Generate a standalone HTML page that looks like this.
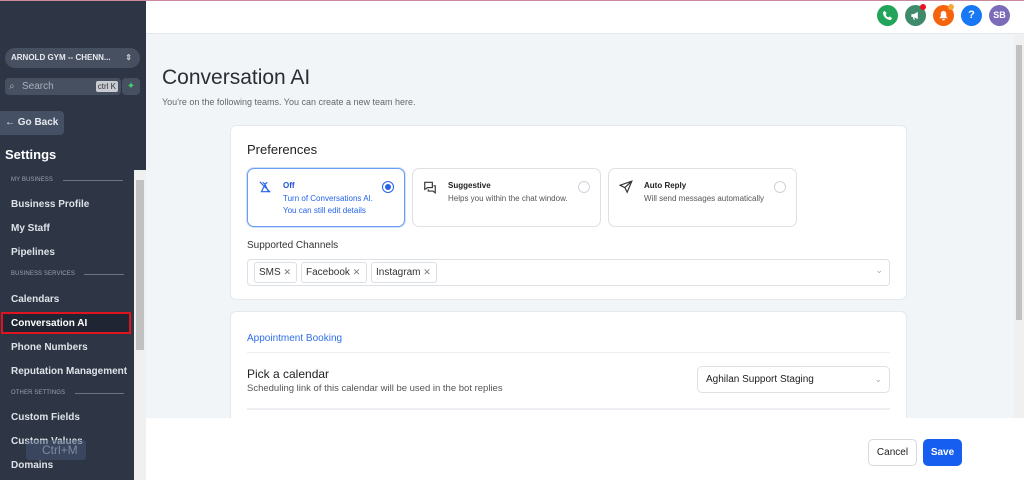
<!DOCTYPE html>
<html><head><meta charset="utf-8"><style>
*{box-sizing:border-box;margin:0;padding:0}
body{width:1024px;height:480px;overflow:hidden;font-family:"Liberation Sans",sans-serif;background:#f2f5f8;position:relative}
.sb{position:absolute;left:0;top:0;width:146px;height:480px;background:#2e3646;color:#e6e9ee}
.topline{position:absolute;left:0;top:0;width:1024px;height:1px;background:#c9889c;z-index:5}
.hdr{position:absolute;left:146px;top:0;width:878px;height:34px;background:#fff;border-bottom:1px solid #e3e6ea}
.ic{position:absolute;top:5px;width:21px;height:21px;border-radius:50%;color:#fff;font-size:11px;font-weight:bold;text-align:center;line-height:21px}
.ic svg{position:absolute;left:5px;top:5px}
.acct{position:absolute;left:5px;top:48px;width:135px;height:20px;border-radius:10px;background:#475061;font-size:8px;font-weight:bold;padding-left:6px;line-height:20px}
.srch{position:absolute;left:5px;top:78px;width:116px;height:17px;border-radius:4px;background:#475061;font-size:10px;color:#a8afba;line-height:17px;padding-left:17px}
.kbd{position:absolute;right:3px;top:3px;background:#c8ccd2;color:#333;font-size:8px;line-height:11px;padding:0 2px;border-radius:2px}
.bolt{position:absolute;left:122px;top:78px;width:18px;height:17px;border-radius:4px;background:#475061;color:#3ecf6a;font-size:10px;text-align:center;line-height:17px}
.back{position:absolute;left:0;top:111px;width:64px;height:24px;border-radius:0 4px 4px 0;background:#465064;font-size:10px;font-weight:bold;line-height:24px;padding-left:5px}
.set{position:absolute;left:5px;top:147px;font-size:13px;font-weight:bold;color:#fff}
.sec{position:absolute;left:11px;font-size:6px;color:#9aa2ae;letter-spacing:.1px}
.sec i{position:absolute;top:3px;height:1px;background:#6c7482}
.it{position:absolute;left:11px;font-size:10px;font-weight:bold;color:#dfe3e8}
.sel{position:absolute;left:1px;top:312px;width:130px;height:22px;border:2px solid #e0141e;background:#1f2533}
.sbar{position:absolute;left:134px;top:170px;width:12px;height:310px;background:#f0f0f0}
.card{position:absolute;background:#fff;border:1px solid #e5e8ec;border-radius:6px}
.opt{position:absolute;top:168px;width:158px;height:59px;border:1px solid #dde1e6;border-radius:7px;background:#fff}
.opt b{position:absolute;left:35px;top:12px;font-size:8px;color:#222}
.opt span{position:absolute;left:35px;top:24px;font-size:8px;line-height:12px;color:#555}
.opt svg{position:absolute;left:10px;top:11px}
.rad{position:absolute;right:10px;top:12px;width:12px;height:12px;border-radius:50%;border:1px solid #cfd4da}
.tag{position:absolute;top:262px;height:21px;border:1px solid #dcdfe4;border-radius:3px;font-size:10px;color:#333;line-height:19px;padding-left:4px}
.tag i{font-style:normal;color:#777;font-size:9px}
.foot{position:absolute;left:146px;top:418px;width:878px;height:62px;background:#fff}
</style></head><body>
<div class="topline"></div>
<div class="sb">
 <div class="acct">ARNOLD GYM -- CHENN...<span style="position:absolute;right:8px;top:0;font-size:8px;color:#ccc">⇕</span></div>
 <div class="srch"><span style="position:absolute;left:4px;top:0;font-size:10px">⌕</span>Search<span class="kbd">ctrl K</span></div>
 <div class="bolt">✦</div>
 <div class="back">← Go Back</div>
 <div class="set">Settings</div>
 <div class="sec" style="top:177px">MY BUSINESS<i style="left:52px;width:60px"></i></div>
 <div class="it" style="top:199px">Business Profile</div>
 <div class="it" style="top:223px">My Staff</div>
 <div class="it" style="top:247px">Pipelines</div>
 <div class="sec" style="top:271px">BUSINESS SERVICES<i style="left:73px;width:40px"></i></div>
 <div class="sel"></div>
 <div class="it" style="top:294px">Calendars</div>
 <div class="it" style="top:318px;color:#fff">Conversation AI</div>
 <div class="it" style="top:342px">Phone Numbers</div>
 <div class="it" style="top:366px">Reputation Management</div>
 <div class="sec" style="top:390px">OTHER SETTINGS<i style="left:64px;width:49px"></i></div>
 <div class="it" style="top:412px">Custom Fields</div>
 <div class="it" style="top:436px">Custom Values</div>
 <div style="position:absolute;left:26px;top:440px;width:60px;height:20px;background:rgba(70,85,115,.5);border-radius:3px;color:rgba(140,155,185,.8);font-size:12px;line-height:20px;padding-left:16px">Ctrl+M</div>
 <div class="it" style="top:460px">Domains</div>
 <div class="sbar"><div style="position:absolute;left:2px;top:10px;width:8px;height:170px;background:#c1c1c1"></div></div>
</div>
<div class="hdr">
 <div class="ic" style="left:731px;background:#22a55a"><svg width="11" height="11" viewBox="0 0 24 24"><path d="M6 2l4 5-2 3c1 3 3 5 6 6l3-2 5 4-3 4C10 22 2 14 2 5z" fill="#fff"/></svg></div>
 <div class="ic" style="left:759px;background:#3e8a6a"><svg width="11" height="11" viewBox="0 0 24 24"><path d="M3 9h5l9-5v16l-9-5H3zM6 15l2 6h3l-2-6" fill="#fff"/></svg></div>
 <div style="position:absolute;left:774px;top:4px;width:6px;height:6px;border-radius:50%;background:#e8141e"></div>
 <div class="ic" style="left:787px;background:#f5630c"><svg width="11" height="11" viewBox="0 0 24 24"><path d="M12 2a6 6 0 0 0-6 6v6l-3 4h18l-3-4V8a6 6 0 0 0-6-6zM9 20a3 3 0 0 0 6 0z" fill="#fff"/></svg></div>
 <div style="position:absolute;left:802px;top:4px;width:6px;height:6px;border-radius:50%;background:#f6a93b"></div>
 <div class="ic" style="left:815px;background:#1877f2">?</div>
 <div class="ic" style="left:843px;background:#7b6bb8;font-size:9px">SB</div>
</div>
<div style="position:absolute;left:1014px;top:35px;width:10px;height:383px;background:#f0f0f0"><div style="position:absolute;left:2px;top:10px;width:6px;height:275px;background:#c1c1c1"></div></div>
<div style="position:absolute;left:162px;top:66px;font-size:21px;color:#2a2f36">Conversation AI</div>
<div style="position:absolute;left:162px;top:97px;font-size:9px;color:#666">You're on the following teams. You can create a new team here.</div>
<div class="card" style="left:230px;top:125px;width:677px;height:175px"></div>
<div style="position:absolute;left:247px;top:142px;font-size:13px;color:#222">Preferences</div>
<div class="opt" style="left:247px;border-color:#6b9df0;box-shadow:0 0 0 1px #cfe0fb"><svg width="14" height="14" viewBox="0 0 24 24" fill="none" stroke="#2563eb" stroke-width="2"><path d="M3 3l18 18M8 4l4 3 4-3M6 20L12 8l6 12z"/></svg><b style="color:#1d4ed8">Off</b><span style="color:#2563eb">Turn of Conversations AI.<br>You can still edit details</span><div class="rad" style="border-color:#2563eb"><div style="margin:2px;width:6px;height:6px;border-radius:50%;background:#2563eb"></div></div></div>
<div class="opt" style="left:412px;width:189px"><svg width="14" height="14" viewBox="0 0 24 24" fill="none" stroke="#333" stroke-width="2"><path d="M3 4h13v9H8l-5 3zM9 16v3h8l4 3V10h-3"/></svg><b>Suggestive</b><span>Helps you within the chat window.</span><div class="rad"></div></div>
<div class="opt" style="left:608px;width:189px"><svg width="14" height="14" viewBox="0 0 24 24" fill="none" stroke="#333" stroke-width="2"><path d="M22 2L2 9l8 4 4 8zM10 13l12-11"/></svg><b>Auto Reply</b><span>Will send messages automatically</span><div class="rad"></div></div>
<div style="position:absolute;left:247px;top:240px;font-size:10px;color:#333">Supported Channels</div>
<div style="position:absolute;left:247px;top:259px;width:643px;height:27px;border:1px solid #dde1e6;border-radius:4px"><span style="position:absolute;right:6px;top:5px;font-size:9px;color:#aaa">⌄</span></div>
<div class="tag" style="left:254px;width:43px">SMS <i>✕</i></div>
<div class="tag" style="left:301px;width:66px">Facebook <i>✕</i></div>
<div class="tag" style="left:371px;width:66px">Instagram <i>✕</i></div>
<div class="card" style="left:230px;top:311px;width:677px;height:130px"></div>
<div style="position:absolute;left:247px;top:333px;font-size:10px;color:#2f6fea">Appointment Booking</div>
<div style="position:absolute;left:247px;top:352px;width:643px;height:1px;background:#eceef1"></div>
<div style="position:absolute;left:247px;top:367px;font-size:12px;color:#222">Pick a calendar</div>
<div style="position:absolute;left:247px;top:383px;font-size:9.5px;color:#555">Scheduling link of this calendar will be used in the bot replies</div>
<div style="position:absolute;left:697px;top:366px;width:193px;height:27px;border:1px solid #dde1e6;border-radius:5px;font-size:10px;color:#222;line-height:25px;padding-left:8px">Aghilan Support Staging<span style="position:absolute;right:7px;top:0;font-size:9px;color:#aaa">⌄</span></div>
<div style="position:absolute;left:247px;top:408px;width:643px;height:2px;background:#eceef1"></div>
<div class="foot">
 <div style="position:absolute;left:722px;top:21px;width:49px;height:27px;border:1px solid #d5d9de;border-radius:5px;font-size:10px;color:#222;text-align:center;line-height:25px">Cancel</div>
 <div style="position:absolute;left:777px;top:21px;width:39px;height:27px;background:#155eef;border-radius:5px;font-size:10px;font-weight:bold;color:#fff;text-align:center;line-height:27px">Save</div>
</div>
</body></html>
